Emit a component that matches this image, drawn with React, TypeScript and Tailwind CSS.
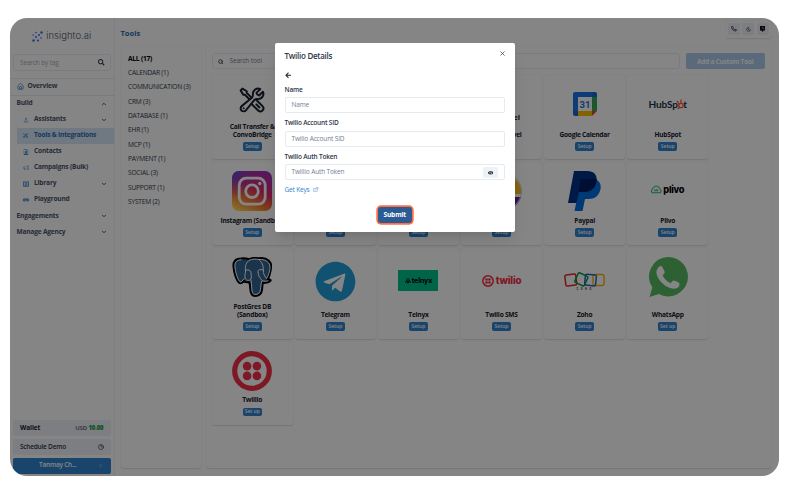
import type { ReactNode } from "react";
import { BsTools, BsPerson, BsMegaphone, BsFileEarmarkPerson } from "react-icons/bs";
import { FaSearch, FaTelegram, FaArrowLeft, FaEye } from "react-icons/fa";
import { HiOutlineWrenchScrewdriver } from "react-icons/hi2";
import {
  LuHouse,
  LuChevronDown,
  LuChevronUp,
  LuChevronRight,
  LuClock3,
  LuSearch,
  LuMoon,
  LuPhone,
  LuX,
  LuExternalLink,
} from "react-icons/lu";

function Logo() {
  return (
    <div className="flex h-[36px] items-center justify-center gap-[3px]">
      <svg width="11" height="11" viewBox="0 0 22 22" fill="#2f6bff">
        <circle cx="8" cy="3" r="1.6" />
        <circle cx="19" cy="3" r="2.4" />
        <circle cx="2.5" cy="8" r="1.5" />
        <circle cx="14" cy="8" r="2" />
        <circle cx="8" cy="12" r="2" />
        <circle cx="18" cy="14" r="1.6" />
        <circle cx="3" cy="19" r="2.4" />
        <circle cx="12" cy="19" r="2" />
      </svg>
      <span className="font-['Inter',sans-serif] text-[9.500px] font-light leading-none tracking-[0.020px] text-[#4a5568]">
        insighto.ai
      </span>
    </div>
  );
}

type NavProps = {
  label: string;
  icon?: ReactNode;
  arrow?: "up" | "down";
  active?: boolean;
  nested?: boolean;
};

function NavItem({ label, icon, arrow, active, nested }: NavProps) {
  return (
    <div
      className={`ml-[6.5px] flex h-[16px] shrink-0 items-center pr-[7px] text-[6.6px] font-bold leading-none ${
        active ? "bg-[#d6e6f8] text-[#2b6cb0]" : "text-[#4a5568]"
      }`}
    >
      {icon && <span className={`flex shrink-0 text-[#3182ce] ${nested ? "w-[17.5px] pl-[6.5px]" : "w-[11px]"}`}>{icon}</span>}
      <span className="flex-1 whitespace-nowrap pt-[0.500px] tracking-[-0.200px]">{label}</span>
      {arrow === "up" && <LuChevronUp size={6} strokeWidth={4} />}
      {arrow === "down" && <LuChevronDown size={6} strokeWidth={4} />}
    </div>
  );
}

function Sidebar() {
  return (
    <aside className="flex w-[104.5px] shrink-0 flex-col border-r border-[#f0f2f5]">
      <Logo />
      <div className="mx-[3px] flex h-[16.5px] items-center justify-between rounded-[3px] border border-[#e8ecf2] pl-[6px] pr-[5px]">
        <span className="pt-[0.500px] text-[6.4px] tracking-[-0.1px] text-[#a0aec0]">Search by tag</span>
        <FaSearch size={6.5} className="text-[#2d3748]" />
      </div>
      <div className="mt-[7px] flex h-[18px] flex-col justify-center border-y border-[#e8ecf2]">
        <NavItem label="Overview" icon={<LuHouse size={7} strokeWidth={2.5} />} />
      </div>
      <nav className="flex flex-col">
        <NavItem label="Build" arrow="up" />
        <NavItem nested label="Assistants" arrow="down" icon={<BsPerson size={6} />} />
        <NavItem nested active label="Tools & Integrations" icon={<BsTools size={5} />} />
        <NavItem nested label="Contacts" icon={<BsFileEarmarkPerson size={6} />} />
        <NavItem nested label="Campaigns (Bulk)" icon={<BsMegaphone size={5.5} />} />
        <NavItem
          nested
          label="Library"
          arrow="down"
          icon={
            <svg width="6" height="6" viewBox="0 0 12 12" fill="none" stroke="currentColor" strokeWidth="1.600">
              <path d="M1 1.500h3.500v9H1zM7.500 1.500H11v9H7.500zM4.500 10.500h3" />
            </svg>
          }
        />
        <NavItem
          nested
          label="Playground"
          icon={
            <svg width="6" height="6" viewBox="0 0 12 12" fill="currentColor">
              <path
                fillRule="evenodd"
                d="M2.500 3h7A2.500 2.500 0 0 1 12 5.500v1A2.500 2.500 0 0 1 9.500 9C8 9 7.500 7.500 6 7.500S4 9 2.500 9A2.500 2.500 0 0 1 0 6.500v-1A2.500 2.500 0 0 1 2.500 3zM3.500 4.800a1.200 1.200 0 1 0 .01 0zM8.500 4.800a1.200 1.200 0 1 0 .01 0z"
              />
            </svg>
          }
        />
        <div className="flex flex-col pt-[0.500px]">
          <NavItem label="Engagements" arrow="down" />
          <NavItem label="Manage Agency" arrow="down" />
        </div>
      </nav>
      <div className="mt-auto flex flex-col gap-[3px] px-[3px] pb-[2.500px] text-[6.5px] font-semibold leading-none text-[#1a202c]">
        <div className="flex h-[16px] items-center justify-between rounded-[2px] bg-[#edf2f7] px-[7px] pt-px">
          <span className="font-bold tracking-[-0.1px]">Wallet</span>
          <span className="text-[6px] tracking-[-0.150px] text-[#4a5568]">
            USD <b className="text-[#1c9a3c]">10.00</b>
          </span>
        </div>
        <div className="flex h-[16px] items-center justify-between rounded-[2px] bg-[#edf2f7] px-[7px] pt-px text-[#2d3748]">
          <span className="tracking-[-0.220px]">Schedule Demo</span>
          <LuClock3 size={6} strokeWidth={2.500} />
        </div>
        <div className="flex h-[16px] items-center justify-between rounded-[2px] bg-[#3182ce] pl-[26px] pr-[7px] text-white">
          <span className="tracking-[-0.220px]">Tanmay Ch...</span>
          <LuChevronRight size={5.5} />
        </div>
      </div>
    </aside>
  );
}

const categories = [
  "CALENDAR (1)",
  "COMMUNICATION (3)",
  "CRM (3)",
  "DATABASE (1)",
  "EHR (1)",
  "MCP (1)",
  "PAYMENT (1)",
  "SOCIAL (3)",
  "SUPPORT (1)",
  "SYSTEM (2)",
];

function InstagramLogo() {
  return (
    <svg width="40" height="40" viewBox="0 0 40 40" className="-mt-px">
      <defs>
        <linearGradient id="ig" x1="0.2" y1="1" x2="0.7" y2="0">
          <stop offset="0" stopColor="#ffd25a" />
          <stop offset="0.3" stopColor="#f8792f" />
          <stop offset="0.6" stopColor="#dd2a6b" />
          <stop offset="1" stopColor="#a62fb8" />
        </linearGradient>
        <radialGradient id="igb" cx="0" cy="0" r="0.7">
          <stop offset="0" stopColor="#4a50dd" />
          <stop offset="1" stopColor="#9c30c0" stopOpacity="0" />
        </radialGradient>
      </defs>
      <rect width="40" height="40" rx="7" fill="url(#ig)" />
      <rect width="40" height="40" rx="7" fill="url(#igb)" />
      <rect x="7.200" y="7.200" width="26" height="26" rx="7" fill="none" stroke="#fff" strokeWidth="2.800" />
      <circle cx="20" cy="20.200" r="6.300" fill="none" stroke="#fff" strokeWidth="2.800" />
      <circle cx="27.800" cy="12.500" r="1.700" fill="#fff" />
    </svg>
  );
}

function PaypalLogo() {
  return (
    <svg width="33" height="40" viewBox="0 0 33 40" className="-mt-px">
      <path d="M13 8h13c5 1 7.500 5 6.500 10-1.500 7-6 10-12 10h-3.500L14.500 40H6.500z" fill="#0070e0" />
      <path d="M6 0h13c7 0 10.500 4 9.500 10-1.500 8-6.500 11-13 11H11L8.500 32H0z" fill="#003087" />
      <path d="M12.500 8H28.600c0 8-5 13-13.100 13H10.500z" fill="#001c64" />
    </svg>
  );
}

function CalendarLogo() {
  return (
    <svg width="24" height="24" viewBox="0 0 24 24" className="overflow-hidden rounded-[2px]">
      <path d="M0 0h19v5H5v14H0z" fill="#1a73e8" />
      <path d="M19 0h5v5h-5z" fill="#1967d2" />
      <path d="M19 5h5v14h-5z" fill="#34a853" />
      <path d="M5 19h14v5H5z" fill="#fbbc04" />
      <path d="M0 19h5v5H0z" fill="#1967d2" />
      <path d="M19 19h5l-5 5z" fill="#ea4335" />
      <path d="M5 5h14v14H5z" fill="#fff" />
      <text x="12" y="15.600" textAnchor="middle" fontSize="9.500" fontWeight="700" fontFamily="Roboto, sans-serif" fill="#1a73e8">
        31
      </text>
    </svg>
  );
}

function HubspotLogo() {
  return (
    <div className="flex items-center font-['Lato',sans-serif] text-[10px] font-bold leading-none tracking-[-0.1px] text-[#213343]">
      HubSp
      <svg width="8" height="13" viewBox="0 0 8 13" fill="none" stroke="#ff5c35" strokeWidth="1.300" className="-ml-[1.500px] -mr-[1px]">
        <circle cx="5" cy="7.500" r="2.200" />
        <path d="M5 5.300V1.500M3.300 6.100 1 3M3.300 9.100 1.800 11" />
      </svg>
      t
    </div>
  );
}

function PlivoLogo() {
  return (
    <div className="-mt-[2px] flex items-center gap-[1.500px] font-['Inter',sans-serif] text-[9.200px] font-extrabold leading-none tracking-[-0.3px] text-black">
      <svg width="10.500" height="9" viewBox="0 0 22 18" fill="none" stroke="#2fb66f" strokeWidth="2.200">
        <path d="M5 16a4 4 0 0 1-3.500-6L4 6.500C6 3 8 1.500 11 1.500s5 1.500 7 5l2.500 3.500A4 4 0 0 1 17 16z" />
        <path d="M7 11.500h8M8 8.500v4M11 7.500v5M14 8.500v4" strokeWidth="1.500" />
      </svg>
      plivo
    </div>
  );
}

function TwilioMark({ size, color }: { size: number; color: string }) {
  return (
    <svg width={size} height={size} viewBox="0 0 40 40" fill={color}>
      <circle cx="20" cy="20" r="17.300" fill="none" stroke={color} strokeWidth="5.200" />
      <circle cx="15.100" cy="15.100" r="4.300" />
      <circle cx="24.900" cy="15.100" r="4.300" />
      <circle cx="15.100" cy="24.900" r="4.300" />
      <circle cx="24.900" cy="24.900" r="4.300" />
    </svg>
  );
}

function ZohoLogo() {
  return (
    <svg width="41" height="18" viewBox="0 0 41 18" fill="none" strokeWidth="1.500">
      <rect x="29" y="2.500" width="11" height="11" rx="1.500" stroke="#f9b21d" />
      <rect x="1.300" y="2.500" width="11" height="11" rx="1.500" stroke="#e42527" transform="rotate(-7 7 8)" />
      <rect x="12" y="2" width="10.500" height="10.500" rx="1.500" stroke="#089949" transform="rotate(24 17 7.500)" />
      <rect x="21" y="2.500" width="11" height="11" rx="1.500" stroke="#226db4" transform="rotate(6 26 8)" />
      <text x="12.500" y="18" fontSize="2.600" letterSpacing="2.600" fontWeight="700" fontFamily="Roboto, sans-serif" fill="#333">
        ZOHO
      </text>
    </svg>
  );
}

function PostgresLogo() {
  return (
    <svg width="40" height="40" viewBox="0 0 40 40" strokeLinecap="round" strokeLinejoin="round">
      <path
        d="M9 1.500C3 1.500 1 5 1.500 10c.5 6 3 14 6 16 1.500 1 3-.5 4.500-2 1 1 3 1.500 4.500 1 1 .5 1.500 2 1.700 6 .2 5 1.300 8 4.800 8 4 0 6.500-2 7-6 .3-3 .5-6 .8-7 3.500 0 6.500-.8 7.700-2.300.5-1-.5-1.400-3-1C38 19 40 9 38.500 6 36.500 2 31 .3 26.500 1.300 23 .5 20 .8 17.500 2.200 15 1.500 11.500 1 9 1.500z"
        fill="#336791"
        stroke="#000"
        strokeWidth="2"
      />
      <g fill="none" stroke="#fff" strokeWidth="1">
        <path d="M9 2.800C4.500 2.800 2.500 5.500 3 10c.5 5.500 2.800 13 5 14.800 1.200.7 2.500-1.300 4-3" />
        <path d="M17.500 3.200C14 5.500 13 9 13.500 13c.3 3-1.500 6 0 9 1 1.500 3.500 2 5 .5 1.500-2 .5-4 .5-7 0-2-2.500-3-5.500-2.500" />
        <path d="M26.500 2.500C30 4.500 31.500 9 31.300 13c0 4 .7 5 3.200 8.500 3-4.500 4.500-12 2.800-14.500C35.500 3.500 30.500 2 26.500 2.500c-3-.8-6-.5-9 .7" />
        <path d="M31 13c-3-1-5-.3-5 1.500 0 4 2 6.500 4 9 2 1 4 1 6 .3M19 23c.5 2 .5 5 .8 8.500.2 4 1.200 6 3.200 6 3 0 5-1.500 5.500-5 .3-3 .5-5 1-8" />
      </g>
    </svg>
  );
}

function WhatsAppLogo() {
  return (
    <svg width="40" height="40" viewBox="0 0 40 40" className="mb-[9px]">
      <path d="M20.300 0A19.700 19.700 0 1 1 11 37.100L1.500 40l2.800-9.500A19.700 19.700 0 0 1 20.300 0z" fill="#57bb63" />
      <path
        d="M10.500 10.300c1.500-1.600 3-1.600 3.800-.3l2.300 4.600c.5 1.200-.3 2.200-2 4 1.800 3.500 4.400 6.200 8 7.700 1.300-1.300 2-2.700 3.200-2.700 1.200.2 4.500 1.900 5.300 2.400.9.600.3 3-.6 4.100-1.800 1.900-5.100 2.200-8.500.9C15.800 28.600 11.500 24.500 9 18.500c-1.200-3.200-.5-6.300 1.500-8.200z"
        fill="#fff"
      />
    </svg>
  );
}

type Tool = { title: string[]; logo: ReactNode; badge?: string };

const tools: Tool[] = [
  {
    title: ["Call Transfer &", "ConvoBridge"],
    logo: <HiOutlineWrenchScrewdriver size={28} strokeWidth={1.7} className="text-[#1a202c]" />,
  },
  { title: [""], logo: null },
  { title: [""], logo: null },
  {
    title: ["Go HighLevel"],
    logo: <span className="pt-[27px] text-[7.500px] font-bold leading-none text-[#1a202c]">HighLevel</span>,
  },
  { title: ["Google Calendar"], logo: <CalendarLogo /> },
  { title: ["HubSpot"], logo: <HubspotLogo /> },
  { title: ["Instagram (Sandbox)"], logo: <InstagramLogo /> },
  { title: [""], logo: null },
  { title: [""], logo: null },
  {
    title: [""],
    logo: (
      <svg width="40" height="40" viewBox="0 0 40 40">
        <path d="M0 23a20 20 0 1 1 40 0z" fill="#f9bf1e" />
        <path d="M1 26h38a20 20 0 0 1-38 0z" fill="#5b2494" />
        <circle cx="20" cy="20" r="19.300" fill="none" stroke="#cbd0d8" strokeWidth="1" />
      </svg>
    ),
  },
  { title: ["Paypal"], logo: <PaypalLogo /> },
  { title: ["Plivo"], logo: <PlivoLogo /> },
  { title: ["PostGres DB", "(Sandbox)"], logo: <PostgresLogo /> },
  { title: ["Telegram"], logo: <FaTelegram size={41} className="text-[#229ed9]" /> },
  {
    title: ["Telnyx"],
    logo: (
      <div className="-mt-[2px] flex h-[21px] w-[40px] items-center justify-center gap-px bg-[#00c08b] font-['Inter',sans-serif] text-[7px] font-bold leading-none tracking-[-0.1px] text-black">
        <svg width="6" height="7" viewBox="0 0 14 14" fill="none" stroke="#000" strokeWidth="2">
          <path d="M1 12 5 4q2-4 4 0l4 8M4.500 12 7 7l2.500 5z" />
        </svg>
        telnyx
      </div>
    ),
  },
  {
    title: ["Twilio SMS"],
    logo: (
      <div className="-mt-px flex items-center gap-[2px] font-['Inter',sans-serif] text-[9.800px] font-extrabold leading-none tracking-[-0.200px] text-[#f22f46]">
        <TwilioMark size={12} color="#f22f46" />
        twilio
      </div>
    ),
  },
  { title: ["Zoho"], logo: <ZohoLogo /> },
  { title: ["WhatsApp"], logo: <WhatsAppLogo />, badge: "Set up" },
  { title: ["Twillio"], logo: <TwilioMark size={40} color="#f22f46" />, badge: "Set up" },
];

function ToolCard({ title, logo, badge = "Setup" }: Tool) {
  return (
    <div className="flex flex-col items-center rounded-[3px] pb-[8.500px] pt-[3.500px] shadow-[0_0.500px_1.500px_rgba(0,0,0,0.13)]">
      <div className="flex min-h-0 flex-1 items-center justify-center">{logo}</div>
      <div className="text-center text-[6.600px] font-bold leading-[8px] tracking-[-0.240px] text-[#1a202c]">
        {title.map((line) => (
          <div key={line} className="h-[8px] whitespace-nowrap">
            {line}
          </div>
        ))}
      </div>
      <div className="mt-[3.500px] flex h-[8.500px] w-[19.500px] items-center justify-center rounded-[2px] bg-[#3182ce] text-[5px] font-semibold leading-none text-white">
        {badge}
      </div>
    </div>
  );
}

function Field({ label, placeholder, reveal }: { label: string; placeholder: string; reveal?: boolean }) {
  return (
    <label className="flex flex-col">
      <span className="h-[8px] text-[6.500px] font-semibold leading-[8px] tracking-[-0.200px] text-[#2d3748]">{label}</span>
      <span className="mt-[3.500px] flex h-[16px] items-center justify-between rounded-[2px] border border-[#e6ebf2] pl-[6px] pr-[6px] pt-[0.500px] text-[6.500px] leading-none tracking-[-0.140px] text-[#718096]">
        {placeholder}
        {reveal && (
          <span className="flex h-[11px] w-[15px] items-center justify-center rounded-[2px] bg-[#edf2f7] text-[#1a202c]">
            <FaEye size={5.500} />
          </span>
        )}
      </span>
    </label>
  );
}

function TwilioDialog() {
  return (
    <section className="flex h-[189px] w-[240px] flex-col rounded-[2px] bg-white pl-[9.500px] pr-[10px] pt-[8px] shadow-lg">
      <header className="flex justify-between text-[#2d3748]">
        <h2 className="text-[8px] font-semibold leading-[10px] tracking-[-0.260px]">Twilio Details</h2>
        <LuX size={7} strokeWidth={2.500} className="-mr-px -mt-[1.500px]" />
      </header>
      <FaArrowLeft size={6.500} className="mt-[11px] text-[#1a202c]" />
      <div className="mt-[7px] flex flex-col gap-[6px]">
        <Field label="Name" placeholder="Name" />
        <Field label="Twilio Account SID" placeholder="Twilio Account SID" />
        <Field label="Twilio Auth Token" placeholder="Twillio Auth Token" reveal />
      </div>
      <a className="mt-[5px] flex items-center gap-[4px] text-[6.500px] leading-[9px] tracking-[-0.180px] text-[#3182ce]">
        Get Keys <LuExternalLink size={5.500} />
      </a>
      <button className="mt-[13px] flex h-[15.500px] w-[33.500px] items-center justify-center self-center rounded-[3px] bg-[#2b5a94] text-[6.600px] font-bold tracking-[-0.150px] text-white shadow-[0_0_0_1.700px_#fb6f42]">
        Submit
      </button>
    </section>
  );
}

export default function App() {
  return (
    <div className="h-[498px] w-[790px] overflow-hidden bg-white px-[10px] pt-[18px] font-['Open_Sans','Noto_Sans',sans-serif]">
      <div className="relative flex h-[458px] w-[769px] overflow-hidden rounded-[17px] bg-white">
        <Sidebar />
        <div className="flex min-w-0 flex-1 flex-col pl-[6px] pr-[8px]">
          <header className="flex h-[29px] items-start justify-between">
            <h1 className="pt-[9.500px] text-[7.500px] font-bold leading-[10px] text-[#2b6cb0]">Tools</h1>
            <div className="mt-[2.500px] flex gap-[2.200px] rounded-[3px] p-[2.500px] text-[#1a202c] shadow-[0_0.500px_1.500px_rgba(0,0,0,0.12)]">
              <span className="flex h-[12px] w-[12px] items-center justify-center rounded-[2px] bg-[#edf2f7]">
                <LuPhone size={5.500} strokeWidth={3} />
              </span>
              <span className="flex h-[12px] w-[12px] items-center justify-center rounded-[2px] bg-[#edf2f7]">
                <LuMoon size={5} strokeWidth={2.500} />
              </span>
              <span className="flex h-[12px] w-[12px] items-center justify-center rounded-[2px] bg-[#edf2f7]">
                <svg width="5" height="6" viewBox="0 0 10 12">
                  <path d="M0 0h10v9H7l-2 3-2-3H0z" fill="#111" />
                  <path d="M3.500 3.500Q5 2 6.500 3.500T5 6" stroke="#fff" fill="none" />
                </svg>
              </span>
            </div>
          </header>
          <div className="flex h-[421px] gap-[4.500px]">
            <ul className="w-[80.500px] shrink-0 rounded-[3px] pl-[7.500px] pt-[4.500px] text-[6.600px] leading-[14.350px] tracking-[-0.200px] text-[#2d3748] shadow-[0_0.500px_1.500px_rgba(0,0,0,0.13)]">
              <li className="font-bold text-black">ALL (17)</li>
              {categories.map((name) => (
                <li key={name} className="whitespace-nowrap">
                  {name}
                </li>
              ))}
            </ul>
            <main className="min-w-0 flex-1 rounded-[3px] px-[6.500px] pt-[6px] shadow-[0_0.500px_1.500px_rgba(0,0,0,0.13)]">
              <div className="flex gap-[6px]">
                <div className="flex h-[16px] flex-1 items-center gap-[6px] rounded-[3px] border border-[#e8ecf2] pl-[5px] pt-[0.500px] text-[6.500px] tracking-[-0.150px] text-[#718096]">
                  <LuSearch size={5.500} strokeWidth={3.500} className="text-[#2d3748]" />
                  Search tool
                </div>
                <div className="flex h-[16px] w-[78.500px] items-center justify-center rounded-[2px] bg-[#3182ce] pt-px text-[6.600px] font-bold tracking-[-0.280px] text-white opacity-40">
                  Add a Custom Tool
                </div>
              </div>
              <div className="mt-[5.500px] grid grid-cols-[repeat(6,80.500px)] grid-rows-[84.500px_83px_91px_82.500px] gap-x-[2.600px] gap-y-[3px]">
                {tools.map((tool, i) => (
                  <ToolCard key={i} {...tool} />
                ))}
              </div>
            </main>
          </div>
        </div>
        <div className="absolute inset-0 flex items-start bg-black/48 pl-[265px] pt-[25px]">
          <TwilioDialog />
        </div>
      </div>
    </div>
  );
}
